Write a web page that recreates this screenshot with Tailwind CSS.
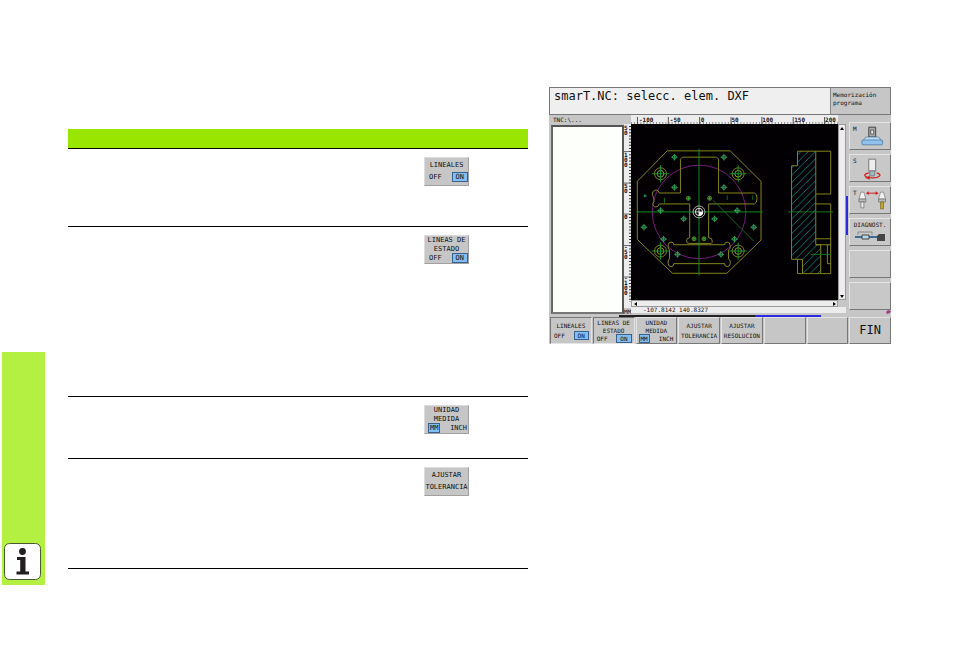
<!DOCTYPE html>
<html lang="es">
<head>
    <meta charset="UTF-8">
    <meta name="viewport" content="width=device-width, initial-scale=1.0">
    <title>smarT.NC: selecc. elem. DXF</title>
    <script src="https://cdn.jsdelivr.net/npm/@tailwindcss/browser@4"></script>
</head>
<body class="bg-white min-h-screen flex items-start pl-[2px] pr-[63px] font-['DejaVu_Sans_Mono',monospace] text-[#111]">

    <!-- Barra lateral -->
    <aside class="mt-[352px] w-[43px] h-[233px] shrink-0 bg-[#b3f042] flex flex-col justify-end items-start pl-[2px] pb-[5px]">
        <svg class="w-[37px] h-[37px]" viewBox="0 0 37 37">
            <rect x=".5" y=".5" width="36" height="36" rx="5" fill="#fff" stroke="#4a5a30"/>
            <circle cx="18.500" cy="8.500" r="3.400" fill="#231f20"/>
            <path d="M13 14h8.500v14.500h3.500v3H12.500v-3h3.700V17H13z" fill="#231f20"/>
        </svg>
    </aside>

    <main class="flex-1 flex items-start gap-[21px] pl-[23px]">

        <!-- Tabla de softkeys -->
        <table class="mt-[129px] flex-460 table w-0 table-fixed border-collapse">
            <colgroup>
                <col>
                <col class="w-[104px]">
            </colgroup>
            <thead>
                <tr class="h-[19px] bg-[#99e600] border-b border-black"><th></th><th></th></tr>
            </thead>
            <tbody>
                <tr class="h-[78px] border-b border-black align-top">
                    <td></td>
                    <td class="pt-[8px]">
                        <button class="w-[45px] h-[29px] bg-[#c6c6c6] border border-[#a0a0a0] border-t-[#dcdcdc] border-l-[#dcdcdc] text-[7px] leading-[8px] flex flex-col justify-evenly items-center">
                            <span>LINEALES</span>
                            <span class="w-full flex justify-between pl-[4px] pr-[1px]"><span>OFF</span><span class="bg-[#80bef5] outline outline-[#38618c] px-[3px]">ON</span></span>
                        </button>
                    </td>
                </tr>
                <tr class="h-[170px] border-b border-black align-top">
                    <td></td>
                    <td class="pt-[8px]">
                        <button class="w-[45px] h-[29px] bg-[#c6c6c6] border border-[#a0a0a0] border-t-[#dcdcdc] border-l-[#dcdcdc] text-[7px] leading-[8px] flex flex-col justify-evenly items-center">
                            <span>LINEAS DE</span>
                            <span>ESTADO</span>
                            <span class="w-full flex justify-between pl-[4px] pr-[1px]"><span>OFF</span><span class="bg-[#80bef5] outline outline-[#38618c] px-[3px]">ON</span></span>
                        </button>
                    </td>
                </tr>
                <tr class="h-[62px] border-b border-black align-top">
                    <td></td>
                    <td class="pt-[8px]">
                        <button class="w-[45px] h-[29px] bg-[#c6c6c6] border border-[#a0a0a0] border-t-[#dcdcdc] border-l-[#dcdcdc] text-[7px] leading-[8px] flex flex-col justify-evenly items-center">
                            <span>UNIDAD</span>
                            <span>MEDIDA</span>
                            <span class="w-full flex justify-between pl-[4px] pr-[1px]"><span class="bg-[#80bef5] outline outline-[#38618c] px-[1px]">MM</span><span>INCH</span></span>
                        </button>
                    </td>
                </tr>
                <tr class="h-[110px] border-b border-black align-top">
                    <td></td>
                    <td class="pt-[8px]">
                        <button class="w-[45px] h-[29px] bg-[#c6c6c6] border border-[#a0a0a0] border-t-[#dcdcdc] border-l-[#dcdcdc] text-[7px] leading-[8px] flex flex-col justify-evenly items-center">
                            <span>AJUSTAR</span>
                            <span>TOLERANCIA</span>
                        </button>
                    </td>
                </tr>
            </tbody>
        </table>

        <!-- Pantalla del control -->
        <section class="mt-[87px] flex-342 w-0 bg-[#c6c6c6] text-[6px] leading-[7px]">
            <header class="flex h-[28px] border border-[#777]">
                <h1 class="flex-1 bg-[#efefef] pl-[4px] text-[12px] leading-[16px] whitespace-nowrap">smarT.NC: selecc. elem. DXF</h1>
                <p class="w-[60px] pl-[2px] pt-[3px] border-l border-[#888] leading-[8px]">Memorización<br>programa</p>
            </header>

            <div class="flex">
                <!-- Árbol de ficheros -->
                <div class="w-[75px] shrink-0 flex flex-col pl-[2px] pb-[1px]">
                    <p class="h-[10px] leading-[10px] pl-[2px]">TNC:\...</p>
                    <div class="flex-1 bg-[#fcfffa] border-2 border-[#555] border-l-[#666] border-b-[#777]"></div>
                </div>

                <!-- Regla vertical -->
                <div class="w-[7px] shrink-0 flex flex-col bg-[#ececec]">
                    <div class="h-[9px] bg-[#c6c6c6]"></div>
                    <svg class="w-full flex-1" viewBox="0 0 7 184" fill="#111">
                        <path d="M6 2v176" stroke="#333" stroke-width="2" stroke-dasharray="1 2.140"/>
                        <path d="M0 27.500h7M0 59h7M0 90h7M0 121.500h7M0 153h7" stroke="#555" stroke-width=".8"/>
                        <g font-size="6" font-weight="bold">
                            <text y="6">5<tspan x="0" dy="5">0</tspan></text>
                            <text y="33">1<tspan x="0" dy="5">0</tspan><tspan x="0" dy="5">0</tspan></text>
                            <text y="64">5<tspan x="0" dy="5">0</tspan></text>
                            <text y="95">0</text>
                            <text y="125">-<tspan x="0" dy="5">5</tspan><tspan x="0" dy="5">0</tspan></text>
                            <text y="156">-<tspan x="0" dy="5">1</tspan><tspan x="0" dy="5">0</tspan><tspan x="0" dy="5">0</tspan></text>
                        </g>
                    </svg>
                    <span class="h-[7px] bg-[#c6c6c6]">MM</span>
                </div>

                <div class="flex-1 min-w-0">
                    <div class="flex">
                        <div class="flex-1 min-w-0">
                            <!-- Regla horizontal -->
                            <svg class="w-full h-[9px] bg-[#ececec]" viewBox="0 0 208 9" fill="#111">
                                <path d="M0 8h208" stroke="#333" stroke-width="1" stroke-dasharray="1 2.140"/>
                                <path d="M6.500 2v7M37.500 2v7M69 2v7M100.500 2v7M131.500 2v7M163 2v7M194.500 2v7" stroke="#555"/>
                                <g font-size="6" font-weight="bold">
                                    <text x="8" y="7">-100</text>
                                    <text x="39" y="7">-50</text>
                                    <text x="70" y="7">0</text>
                                    <text x="101" y="7">50</text>
                                    <text x="132" y="7">100</text>
                                    <text x="164" y="7">150</text>
                                    <text x="195" y="7">200</text>
                                </g>
                            </svg>

                            <!-- Dibujo DXF -->
                            <svg class="w-full bg-[#020003]" viewBox="3 -48 624 531" fill="none" stroke-width="2.800">
                                <defs>
                                    <pattern id="rayado" width="22" height="22" patternUnits="userSpaceOnUse">
                                        <path d="M-3 25L25-3M-3 3l6-6M19 25l6-6" stroke="#12868a" stroke-width="2.600"/>
                                    </pattern>
                                    <g id="taladro">
                                        <circle r="6" stroke="#2f8d62" stroke-width="3"/>
                                        <path d="M-10 0h20M0-10v20" stroke="#35b04f" stroke-width="2.400"/>
                                    </g>
                                    <g id="punto">
                                        <circle r="6" stroke="#6d8f25"/>
                                        <path d="M-5 0h10M0-5v10" stroke="#25c040"/>
                                    </g>
                                    <g id="rosca">
                                        <circle r="18" stroke="#8a8a20"/>
                                        <circle r="10" stroke="#a4a428"/>
                                        <path d="M-26 0h52M0-26v52" stroke="#159a28"/>
                                    </g>
                                </defs>

                                <circle cx="208" cy="217" r="141" stroke="#801a86"/>

                                <!-- Contornos de la pieza -->
                                <g stroke="#8f8f1f">
                                    <path d="M112 33H302L395 125V302L292 402H128L22 300V125z"/>
                                    <path d="M152 160V58l6-6h103l6 6v102h108q8 2 8 16t-8 17H237v102q11 0 11 10t-11 7H179q-9 0-9-8t10-9V193H88q-2 9-10 9c-9 0-10-8-8-12 5-6 2-10 0-18-6-12 0-21 9-21q7 0 9 9z"/>
                                    <path d="M132 316H285q0-8 8-8t9 10v8l-5 6v26l5 7v8q-1 9-9 9t-8-9H132q0 9-8 9t-9-9v-8l4-7v-26l-4-6v-9q0-9 9-9t8 8z"/>
                                </g>

                                <!-- Ejes -->
                                <path d="M20 217H400M208 27V408" stroke="#109422"/>
                                <path d="M250 182L373 305" stroke="#126e20"/>
                                <path d="M104 174v16M293 167v14M370 167v14" stroke="#126e20"/>

                                <use href="#rosca" x="92" y="102"/>
                                <use href="#rosca" x="326" y="102"/>
                                <use href="#rosca" x="92" y="335"/>
                                <use href="#rosca" x="326" y="335"/>

                                <use href="#taladro" x="134" y="52"/>
                                <use href="#taladro" x="283" y="52"/>
                                <use href="#taladro" x="134" y="143"/>
                                <use href="#taladro" x="283" y="143"/>
                                <use href="#taladro" x="92" y="213"/>
                                <use href="#taladro" x="323" y="213"/>
                                <use href="#taladro" x="162" y="238"/>
                                <use href="#taladro" x="255" y="238"/>
                                <use href="#taladro" x="42" y="263"/>
                                <use href="#taladro" x="373" y="263"/>
                                <use href="#taladro" x="101" y="299"/>
                                <use href="#taladro" x="315" y="299"/>
                                <use href="#taladro" x="143" y="345"/>
                                <use href="#taladro" x="274" y="345"/>

                                <use href="#punto" x="176" y="176"/>
                                <use href="#punto" x="240" y="176"/>
                                <use href="#punto" x="193" y="298"/>
                                <use href="#punto" x="223" y="298"/>
                                <path d="M41 169h9M45 164v9" stroke="#35b070"/>

                                <!-- Punto cero -->
                                <circle cx="208" cy="217" r="18" stroke="#bbb"/>
                                <circle cx="208" cy="217" r="11" fill="#000" stroke="#eee"/>
                                <path d="M208 217h12q0 12-12 12z" fill="#fff"/>
                                <path d="M197 217h22M208 206v22" stroke="#ddd"/>

                                <!-- Vista lateral -->
                                <path d="M505 34h55v282h15v87h-55v-43h-33V78h18z" fill="url(#rayado)" stroke="#8f8f1f"/>
                                <path d="M560 34h45v129h-45M560 193h45v210h-30M560 298h45M560 316h45M595 316v57h10M505 360v43h15" stroke="#8f8f1f"/>
                                <path d="M477 217H613M545 345h60" stroke="#107c1c"/>
                            </svg>
                        </div>

                        <!-- Barra de desplazamiento vertical -->
                        <div class="w-[8px] flex flex-col justify-between bg-[#ededed] border border-[#999] mt-[9px]">
                            <button class="h-[6px] flex items-center justify-center" aria-label="Subir"><svg class="w-[4px] h-[3px]" viewBox="0 0 4 3"><path d="M2 0l2 3H0z"/></svg></button>
                            <button class="h-[6px] flex items-center justify-center" aria-label="Bajar"><svg class="w-[4px] h-[3px]" viewBox="0 0 4 3"><path d="M0 0h4L2 3z"/></svg></button>
                        </div>
                    </div>

                    <!-- Barra de desplazamiento horizontal -->
                    <div class="h-[7px] mr-[8px] flex justify-between bg-[#ededed] border border-[#999]">
                        <button class="w-[6px] flex items-center justify-center" aria-label="Izquierda"><svg class="w-[3px] h-[4px]" viewBox="0 0 3 4"><path d="M3 0v4L0 2z"/></svg></button>
                        <button class="w-[6px] flex items-center justify-center" aria-label="Derecha"><svg class="w-[3px] h-[4px]" viewBox="0 0 3 4"><path d="M0 0v4l3-2z"/></svg></button>
                    </div>
                    <p class="h-[6px] leading-[6px] bg-[#ececec] pl-[12px] whitespace-nowrap">-107.8142 140.8327</p>
                </div>

                <!-- Teclas de máquina -->
                <div class="w-[45px] shrink-0 flex">
                    <div class="w-[2px] shrink-0 h-[39px] mt-[81px] bg-[#2a2ae0]"></div>
                    <div class="flex-1 min-w-0 flex flex-col gap-[4px] pt-[7px] pl-[1px]">
                        <button class="h-[28px] flex items-start bg-[#c8c8c8] border border-[#e4e4e4] border-b-[#777] border-r-[#777] pl-[3px] pt-[2px]">
                            <span>M</span>
                            <svg class="w-[34px] h-[24px]" viewBox="0 0 34 24">
                                <path d="M12 2h7v10h-7z" fill="#aaa" stroke="#444"/>
                                <path d="M14 5h3v4h-3z" fill="#eee" stroke="#333" stroke-width=".7"/>
                                <path d="M9 12h13l3 4H6z" fill="#bddcf5" stroke="#4d7193" stroke-width=".7"/>
                                <rect x="5" y="15" width="21" height="5" rx="1" fill="#8fc2ee" stroke="#3b6a95" stroke-width=".7"/>
                            </svg>
                        </button>
                        <button class="h-[28px] flex items-start bg-[#c8c8c8] border border-[#e4e4e4] border-b-[#777] border-r-[#777] pl-[3px] pt-[2px]">
                            <span>S</span>
                            <svg class="w-[34px] h-[24px]" viewBox="0 0 34 24" fill="none">
                                <path d="M12 2h7v12h-7z" fill="#eee" stroke="#777"/>
                                <path d="M13 14h5v5h-5z" fill="#9db8c8" stroke="#666" stroke-width=".7"/>
                                <path d="M12 16c-8 2-3 5 4 5 6 0 11-3 4-5" stroke="#d02020" stroke-width="1.300"/>
                                <path d="M8 21l5-2v4z" fill="#d02020"/>
                            </svg>
                        </button>
                        <button class="h-[28px] flex items-start bg-[#c8c8c8] border border-[#e4e4e4] border-b-[#777] border-r-[#777] pl-[3px] pt-[2px]">
                            <span>T</span>
                            <svg class="w-[34px] h-[24px]" viewBox="0 0 34 24">
                                <path d="M4 3h3l2 7H2zM24 3h3l2 7h-7z" fill="#f2f2f2" stroke="#777" stroke-width=".7"/>
                                <path d="M2 10h7v3H2zM22 10h7v3h-7z" fill="#bbb" stroke="#666" stroke-width=".7"/>
                                <path d="M4 13h3v6H4z" fill="#eee" stroke="#666" stroke-width=".7"/>
                                <path d="M24 13h3v7h-3z" fill="#c4a62c" stroke="#75671f" stroke-width=".7"/>
                                <path d="M11 4h9" stroke="#d02020"/>
                                <path d="M12 2v4L9 4zM19 2v4l3-2z" fill="#d02020"/>
                            </svg>
                        </button>
                        <button class="h-[28px] flex flex-col items-center bg-[#c8c8c8] border border-[#e4e4e4] border-b-[#777] border-r-[#777] pt-[2px]">
                            <span>DIAGNOST.</span>
                            <svg class="w-[32px] h-[16px]" viewBox="0 0 32 16" fill="none">
                                <path d="M4 7V4h14v3" stroke="#888"/>
                                <path d="M1 9h22" stroke="#3c6c94" stroke-width="2"/>
                                <path d="M8 7h7v4H8z" fill="#b8d6e8" stroke="#444"/>
                                <path d="M23 8l2-2h6v7h-8z" fill="#444"/>
                            </svg>
                        </button>
                        <button class="h-[28px] bg-[#c8c8c8] border border-[#e4e4e4] border-b-[#777] border-r-[#777]" aria-label="Libre"></button>
                        <button class="h-[28px] bg-[#c8c8c8] border border-[#e4e4e4] border-b-[#777] border-r-[#777]" aria-label="Libre"></button>
                        <svg class="w-[5px] h-[4px] self-end -mt-[4px]" viewBox="0 0 5 4"><path d="M0 2l2-2 3 1-1 2-3 1z" fill="#a33a86"/></svg>
                    </div>
                </div>
            </div>

            <!-- Indicador de barras de softkeys -->
            <div class="h-[2px] flex pl-[70px]">
                <div class="flex-136 bg-[#222]"></div>
                <div class="flex-66 bg-[#2a2ae0]"></div>
                <div class="flex-70"></div>
            </div>

            <!-- Softkeys -->
            <nav class="grid grid-cols-8 gap-px pl-px">
                <button class="h-[27px] bg-[#c6c6c6] border border-[#777] border-r-[#e4e4e4] border-b-[#e4e4e4] flex flex-col justify-evenly items-center">
                    <span>LINEALES</span>
                    <span class="w-full flex justify-between px-[3px]"><span>OFF</span><span class="bg-[#80bef5] outline outline-[#38618c] px-[3px]">ON</span></span>
                </button>
                <button class="h-[27px] bg-[#c6c6c6] border border-[#777] border-r-[#e4e4e4] border-b-[#e4e4e4] flex flex-col justify-evenly items-center">
                    <span>LINEAS DE</span>
                    <span>ESTADO</span>
                    <span class="w-full flex justify-between px-[3px]"><span>OFF</span><span class="bg-[#80bef5] outline outline-[#38618c] px-[3px]">ON</span></span>
                </button>
                <button class="h-[27px] bg-[#c6c6c6] border border-[#e4e4e4] border-r-[#777] border-b-[#777] flex flex-col justify-evenly items-center">
                    <span>UNIDAD</span>
                    <span>MEDIDA</span>
                    <span class="w-full flex justify-between px-[3px]"><span class="bg-[#80bef5] outline outline-[#38618c] px-[1px]">MM</span><span>INCH</span></span>
                </button>
                <button class="h-[27px] bg-[#c6c6c6] border border-[#e4e4e4] border-r-[#777] border-b-[#777] flex flex-col justify-evenly items-center">
                    <span>AJUSTAR</span>
                    <span>TOLERANCIA</span>
                </button>
                <button class="h-[27px] bg-[#c6c6c6] border border-[#e4e4e4] border-r-[#777] border-b-[#777] flex flex-col justify-evenly items-center">
                    <span>AJUSTAR</span>
                    <span>RESOLUCION</span>
                </button>
                <button class="h-[27px] bg-[#c6c6c6] border border-[#e4e4e4] border-r-[#777] border-b-[#777]" aria-label="Libre"></button>
                <button class="h-[27px] bg-[#c6c6c6] border border-[#e4e4e4] border-r-[#777] border-b-[#777]" aria-label="Libre"></button>
                <button class="h-[27px] bg-[#c6c6c6] border border-[#e4e4e4] border-r-[#777] border-b-[#777] text-[12px]">FIN</button>
            </nav>
        </section>
    </main>
</body>
</html>
